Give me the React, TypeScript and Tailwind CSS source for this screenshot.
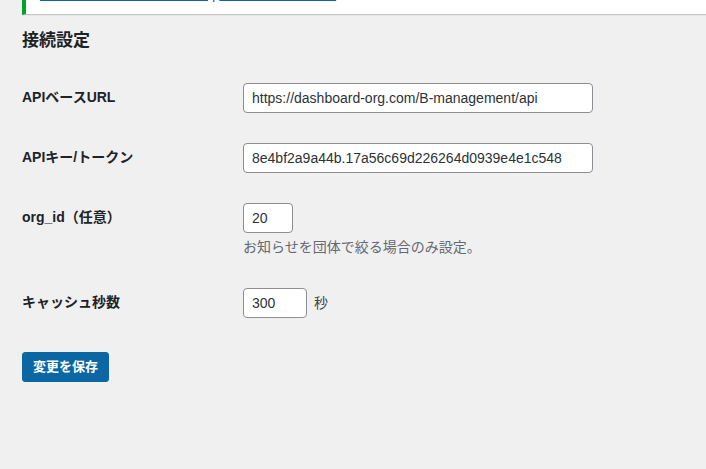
const font = {
  fontFamily: '"Liberation Sans", "Noto Sans CJK JP", sans-serif',
}

interface RowProps {
  label: string
  children: React.ReactNode
}

function Row({ label, children }: RowProps) {
  return (
    <div className="flex">
      <div className="w-[211px] shrink-0 pt-[20px] pr-[10px] pb-[20px] text-[14px] leading-[1.3] font-bold text-[#1d2327]">
        {label}
      </div>
      <div className="py-[15px] pl-[10px]">{children}</div>
    </div>
  )
}

const inputCls =
  'h-[30px] rounded-[4px] border border-[#8c8f94] bg-white px-[8px] text-[14px] text-[#2c3338] outline-none'

export default function App() {
  return (
    <div style={font} className="min-h-screen bg-[#f0f0f1] pl-[22px] text-[13px] text-[#3c434a]">
      <div className="h-[15px] overflow-hidden border-b border-l-4 border-[#c3c4c7] border-l-[#00a32a] bg-white pl-[14px] shadow-[0_1px_1px_rgba(0,0,0,0.04)]">
        <p className="-mt-[15px] flex items-center gap-[4px] whitespace-nowrap text-[13px] leading-[19px]">
          <a href="#" className="inline-block w-[168px] overflow-hidden text-[#0a67a3] underline">
            ショートコードの使い方を表示する
          </a>
          <span className="text-[#3c434a]">|</span>
          <a href="#" className="inline-block w-[120px] overflow-hidden text-[#0a67a3] underline">
            お知らせ一覧を確認
          </a>
        </p>
      </div>

      <h2 className="mt-[15px] text-[17px] leading-[1.3] font-semibold text-[#1d2327]">接続設定</h2>

      <div className="mt-[16px]">
        <Row label="APIベースURL">
          <input
            className={`${inputCls} w-[350px]`}
            defaultValue="https://dashboard-org.com/B-management/api"
          />
        </Row>
        <Row label="APIキー/トークン">
          <input
            className={`${inputCls} w-[350px]`}
            defaultValue="8e4bf2a9a44b.17a56c69d226264d0939e4e1c548"
          />
        </Row>
        <Row label="org_id（任意）">
          <input className={`${inputCls} w-[50px]`} defaultValue="20" />
          <p className="mt-[4px] text-[14px] leading-[1.5] text-[#646970]">
            お知らせを団体で絞る場合のみ設定。
          </p>
        </Row>
        <Row label="キャッシュ秒数">
          <div className="flex items-center gap-[7px]">
            <input className={`${inputCls} w-[64px]`} defaultValue="300" />
            <span className="text-[14px] text-[#3c434a]">秒</span>
          </div>
        </Row>
      </div>

      <div className="mt-[19px]">
        <button
          type="button"
          className="h-[30px] rounded-[3px] border border-[#0a67a3] bg-[#0a67a3] px-[10px] text-[13px] font-semibold text-white"
        >
          変更を保存
        </button>
      </div>
    </div>
  )
}
